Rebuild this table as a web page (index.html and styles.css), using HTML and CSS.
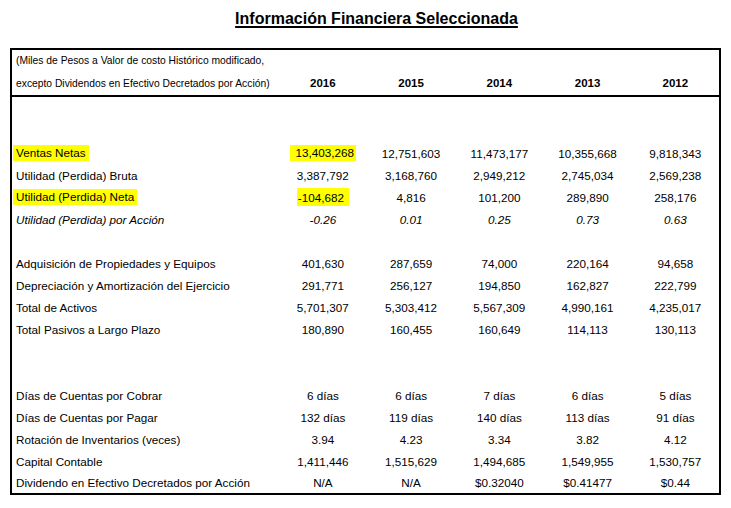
FILE: index.html
```html
<!DOCTYPE html>
<html lang="es">
<head>
<meta charset="utf-8">
<title>Información Financiera Seleccionada</title>
<link rel="stylesheet" href="styles.css">
</head>
<body>
<h1 class="title">Información Financiera Seleccionada</h1>
<table class="fin">
  <colgroup>
    <col class="c-label"><col class="c-year"><col class="c-year"><col class="c-year"><col class="c-year"><col class="c-year">
  </colgroup>
  <thead>
    <tr class="h1"><th class="note">(Miles de Pesos a Valor de costo Histórico modificado,</th><th></th><th></th><th></th><th></th><th></th></tr>
    <tr class="h2"><th class="note">excepto Dividendos en Efectivo Decretados por Acción)</th><th>2016</th><th>2015</th><th>2014</th><th>2013</th><th>2012</th></tr>
  </thead>
  <tbody>
    <tr class="blank first"><td></td><td></td><td></td><td></td><td></td><td></td></tr>
    <tr class="blank"><td></td><td></td><td></td><td></td><td></td><td></td></tr>
    <tr><td><span class="hl hl-label">Ventas Netas</span></td><td><span class="hl hl-num1">13,403,268</span></td><td>12,751,603</td><td>11,473,177</td><td>10,355,668</td><td>9,818,343</td></tr>
    <tr><td>Utilidad (Perdida) Bruta</td><td>3,387,792</td><td>3,168,760</td><td>2,949,212</td><td>2,745,034</td><td>2,569,238</td></tr>
    <tr><td><span class="hl hl-label">Utilidad (Perdida) Neta</span></td><td><span class="hl hl-num2">-104,682</span></td><td>4,816</td><td>101,200</td><td>289,890</td><td>258,176</td></tr>
    <tr class="ital"><td>Utilidad (Perdida) por Acción</td><td>-0.26</td><td>0.01</td><td>0.25</td><td>0.73</td><td>0.63</td></tr>
    <tr class="blank"><td></td><td></td><td></td><td></td><td></td><td></td></tr>
    <tr><td>Adquisición de Propiedades y Equipos</td><td>401,630</td><td>287,659</td><td>74,000</td><td>220,164</td><td>94,658</td></tr>
    <tr><td>Depreciación y Amortización del Ejercicio</td><td>291,771</td><td>256,127</td><td>194,850</td><td>162,827</td><td>222,799</td></tr>
    <tr><td>Total de Activos</td><td>5,701,307</td><td>5,303,412</td><td>5,567,309</td><td>4,990,161</td><td>4,235,017</td></tr>
    <tr><td>Total Pasivos a Largo Plazo</td><td>180,890</td><td>160,455</td><td>160,649</td><td>114,113</td><td>130,113</td></tr>
    <tr class="blank"><td></td><td></td><td></td><td></td><td></td><td></td></tr>
    <tr class="blank"><td></td><td></td><td></td><td></td><td></td><td></td></tr>
    <tr><td>Días de Cuentas por Cobrar</td><td>6 días</td><td>6 días</td><td>7 días</td><td>6 días</td><td>5 días</td></tr>
    <tr><td>Días de Cuentas por Pagar</td><td>132 días</td><td>119 días</td><td>140 días</td><td>113 días</td><td>91 días</td></tr>
    <tr><td>Rotación de Inventarios (veces)</td><td>3.94</td><td>4.23</td><td>3.34</td><td>3.82</td><td>4.12</td></tr>
    <tr><td>Capital Contable</td><td>1,411,446</td><td>1,515,629</td><td>1,494,685</td><td>1,549,955</td><td>1,530,757</td></tr>
    <tr class="last"><td>Dividendo en Efectivo Decretados por Acción</td><td>N/A</td><td>N/A</td><td>$0.32040</td><td>$0.41477</td><td>$0.44</td></tr>
  </tbody>
</table>
</body>
</html>
```

FILE: styles.css
```css
html, body {
  margin: 0;
  padding: 0;
  background: #ffffff;
}
body {
  font-family: "Liberation Sans", Arial, sans-serif;
  color: #000000;
}
.title {
  margin: 0 0 19px 0;
  padding: 9px 0 0 22px;
  height: 20px;
  line-height: 20px;
  font-size: 16px;
  font-weight: bold;
  text-align: center;
  text-decoration: underline;
  text-underline-offset: 2px;
  text-decoration-thickness: 2px;
}
.fin {
  margin-left: 10px;
  width: 711px;
  border: 2px solid #000;
  border-collapse: collapse;
  table-layout: fixed;
  font-size: 11.7px;
}
.c-label { width: 267px; }
.c-year { width: 88px; }
.fin th, .fin td {
  padding: 0;
  text-align: center;
  white-space: nowrap;
  vertical-align: middle;
}
.fin thead tr.h1 { height: 22px; }
.fin thead tr.h2 { height: 25px; border-bottom: 2px solid #000; }
.fin thead th { font-weight: bold; font-size: 11.5px; }
.fin thead th.note {
  font-weight: normal;
  font-size: 10.3px;
  text-align: left;
  padding-left: 4px;
}
.fin tbody tr { height: 22px; }
.fin tbody tr.first { height: 24px; }
.fin tbody tr.last { height: 22px; }
.fin tbody td:first-child {
  text-align: left;
  padding-left: 4px;
}
.ital td { font-style: italic; }
.hl {
  background: #ffff00;
  display: inline-block;
  line-height: 15px;
}
.hl-label { margin-left: -3px; padding: 0 3px 1px 3px; }
.hl-num1 { padding: 0 2px 1px 6px; }
.hl-num2 { padding: 2px 5px 1px 1px; }
```
